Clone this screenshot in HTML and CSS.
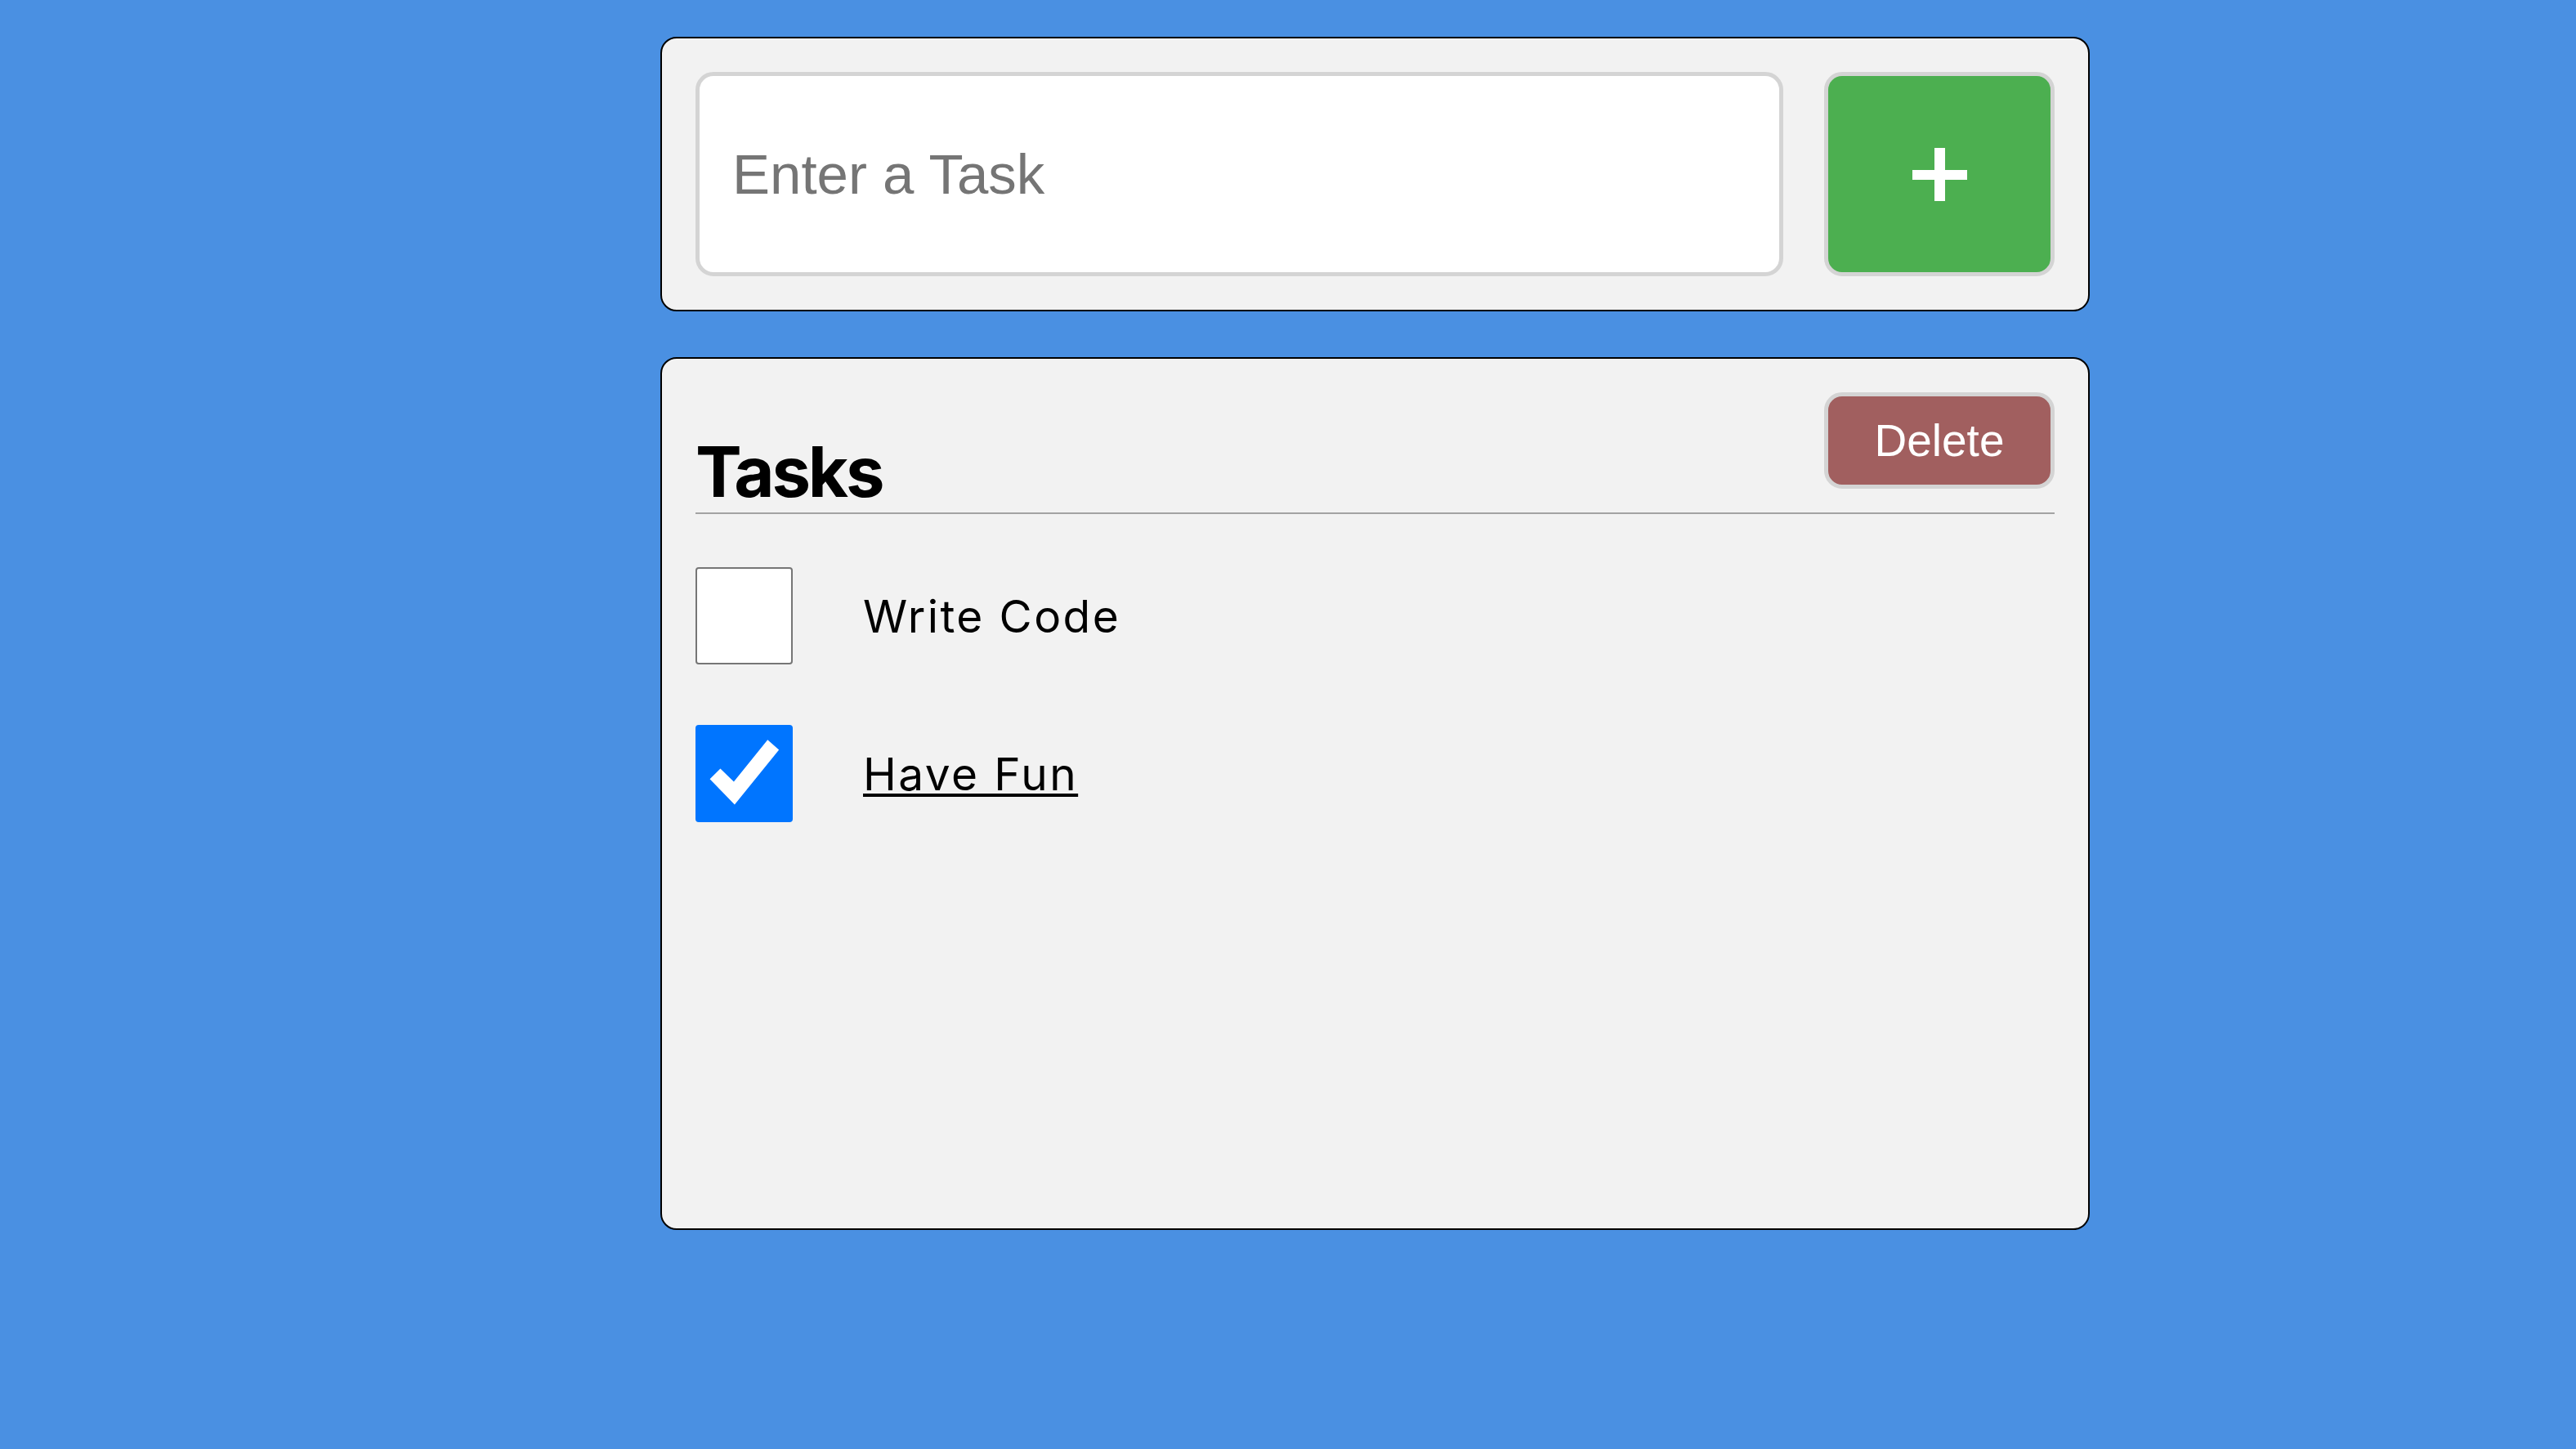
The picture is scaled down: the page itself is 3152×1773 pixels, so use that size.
FILE: index.html
```html
<!DOCTYPE html>
<html lang="en">
<head>
<meta charset="utf-8">
<title>Tasks</title>
<link rel="stylesheet" href="styles.css">
</head>
<body>
<main class="app">
  <section class="panel entry">
    <input class="task-input" type="text" placeholder="Enter a Task">
    <button class="add-btn" type="button" aria-label="Add task">
      <svg class="plus" width="67" height="65" viewBox="0 0 67 65" aria-hidden="true">
        <rect x="0" y="27" width="67" height="12" fill="#fff"/>
        <rect x="27" y="0" width="13" height="65" fill="#fff"/>
      </svg>
    </button>
  </section>
  <section class="panel list">
    <header class="list-head">
      <h2 class="list-title">Tasks</h2>
      <button class="delete-btn" type="button">Delete</button>
    </header>
    <ul class="tasks">
      <li class="task">
        <span class="box"></span>
        <span class="task-text">Write Code</span>
      </li>
      <li class="task done">
        <span class="box checked">
          <svg width="120" height="120" viewBox="0 0 120 120" aria-hidden="true">
            <polygon points="30.7,54 17.7,66.7 48.3,98.3 103,30.7 89,18.3 47.3,70" fill="#fff"/>
          </svg>
        </span>
        <span class="task-text">Have Fun</span>
      </li>
    </ul>
  </section>
</main>
</body>
</html>
```
FILE: styles.css
```css
* { box-sizing: border-box; }
html, body { margin: 0; padding: 0; }
body {
  background: #4a90e2;
  min-height: 1773px;
  font-family: "Liberation Sans", Arial, sans-serif;
}
.app {
  width: 1749px;
  margin: 45px 0 0 808px;
  display: flex;
  flex-direction: column;
  gap: 56px;
}
.panel {
  background: #f2f2f2;
  border: 2px solid #000;
  border-radius: 20px;
  padding: 41px;
}
.entry {
  display: flex;
  gap: 50px;
  height: 336px;
}
.task-input {
  flex: 1;
  height: 250px;
  border: 5px solid #d4d4d4;
  border-radius: 22px;
  background: #fff;
  padding: 0 40px;
  font-family: "Liberation Sans", Arial, sans-serif;
  font-size: 69px;
  color: #222;
  outline: none;
}
.task-input::placeholder { color: #757575; }
.add-btn {
  width: 282px;
  height: 250px;
  border: 5px solid #d4d4d4;
  border-radius: 22px;
  background: #4caf50;
  display: flex;
  align-items: center;
  justify-content: center;
  padding: 0;
}
.plus { display: block; }
.list { height: 1068px; }
.list-head {
  display: flex;
  justify-content: space-between;
  align-items: flex-start;
  border-bottom: 2px solid #a3a3a3;
  padding-bottom: 7px;
}
.list-title {
  margin: 55px 0 0 0;
  font-family: Inter, "Open Sans", sans-serif;
  font-weight: 700;
  font-size: 85px;
  line-height: 1;
  letter-spacing: -3.2px;
  color: #000;
}
.delete-btn {
  width: 282px;
  height: 118px;
  border: 5px solid #d4d4d4;
  border-radius: 22px;
  background: #a15f5f;
  color: #fff;
  font-family: "Liberation Sans", Arial, sans-serif;
  font-size: 55px;
  padding: 0;
}
.tasks {
  list-style: none;
  margin: 65px 0 0 0;
  padding: 0;
  display: flex;
  flex-direction: column;
  gap: 74px;
}
.task {
  display: flex;
  align-items: center;
  gap: 86px;
}
.box {
  width: 119px;
  height: 119px;
  flex: none;
  background: #fff;
  border: 2px solid #767676;
  border-radius: 4px;
}
.box.checked {
  background: #0075ff;
  border: none;
  overflow: hidden;
}
.box.checked svg { display: block; width: 119px; height: 119px; }
.task-text {
  font-family: Inter, "Open Sans", sans-serif;
  font-size: 55px;
  letter-spacing: 2.4px;
  color: #000;
}
.done .task-text {
  text-decoration: underline;
  text-decoration-thickness: 4px;
  text-underline-offset: 4px;
}
```
